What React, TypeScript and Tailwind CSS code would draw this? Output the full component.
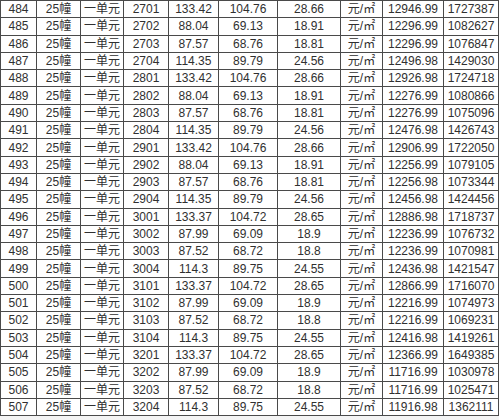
const widths = [36, 44, 43, 45, 50, 59, 63, 42, 61, 55];

// 序号 房号 建面 套内 分摊 单价 总价
const rows: [number, string, string, string, string, string, string][] = [
  [484, '2701', '133.42', '104.76', '28.66', '12946.99', '1727387'],
  [485, '2702', '88.04', '69.13', '18.91', '12296.99', '1082627'],
  [486, '2703', '87.57', '68.76', '18.81', '12296.99', '1076847'],
  [487, '2704', '114.35', '89.79', '24.56', '12496.98', '1429030'],
  [488, '2801', '133.42', '104.76', '28.66', '12926.98', '1724718'],
  [489, '2802', '88.04', '69.13', '18.91', '12276.99', '1080866'],
  [490, '2803', '87.57', '68.76', '18.81', '12276.99', '1075096'],
  [491, '2804', '114.35', '89.79', '24.56', '12476.98', '1426743'],
  [492, '2901', '133.42', '104.76', '28.66', '12906.99', '1722050'],
  [493, '2902', '88.04', '69.13', '18.91', '12256.99', '1079105'],
  [494, '2903', '87.57', '68.76', '18.81', '12256.98', '1073344'],
  [495, '2904', '114.35', '89.79', '24.56', '12456.98', '1424456'],
  [496, '3001', '133.37', '104.72', '28.65', '12886.98', '1718737'],
  [497, '3002', '87.99', '69.09', '18.9', '12236.99', '1076732'],
  [498, '3003', '87.52', '68.72', '18.8', '12236.99', '1070981'],
  [499, '3004', '114.3', '89.75', '24.55', '12436.98', '1421547'],
  [500, '3101', '133.37', '104.72', '28.65', '12866.99', '1716070'],
  [501, '3102', '87.99', '69.09', '18.9', '12216.99', '1074973'],
  [502, '3103', '87.52', '68.72', '18.8', '12216.99', '1069231'],
  [503, '3104', '114.3', '89.75', '24.55', '12416.98', '1419261'],
  [504, '3201', '133.37', '104.72', '28.65', '12366.99', '1649385'],
  [505, '3202', '87.99', '69.09', '18.9', '11716.99', '1030978'],
  [506, '3203', '87.52', '68.72', '18.8', '11716.99', '1025471'],
  [507, '3204', '114.3', '89.75', '24.55', '11916.98', '1362111'],
];

export default function App() {
  return (
    <div className="h-[420px] w-[499px] overflow-hidden bg-[#f4f4f4]">
      <table
        className="table-fixed border-collapse bg-white text-center text-[12px] leading-[10px] text-[#303030]"
        style={{ fontFamily: '"Liberation Sans", "Noto Sans CJK SC", sans-serif', width: 498 }}
      >
        <colgroup>
          {widths.map((w, i) => (
            <col key={i} style={{ width: w }} />
          ))}
        </colgroup>
        <tbody>
          {rows.map((r) => (
            <tr key={r[0]} className="h-[17.3px]">
              <td className="border border-[#4a4a4a] p-0">{r[0]}</td>
              <td className="border border-[#4a4a4a] p-0">25幢</td>
              <td className="border border-[#4a4a4a] p-0">一单元</td>
              <td className="border border-[#4a4a4a] p-0">{r[1]}</td>
              <td className="border border-[#4a4a4a] p-0">{r[2]}</td>
              <td className="border border-[#4a4a4a] p-0">{r[3]}</td>
              <td className="border border-[#4a4a4a] p-0">{r[4]}</td>
              <td className="border border-[#4a4a4a] p-0">元/㎡</td>
              <td className="border border-[#4a4a4a] p-0">{r[5]}</td>
              <td className="border border-[#4a4a4a] p-0">{r[6]}</td>
            </tr>
          ))}
        </tbody>
      </table>
    </div>
  );
}
